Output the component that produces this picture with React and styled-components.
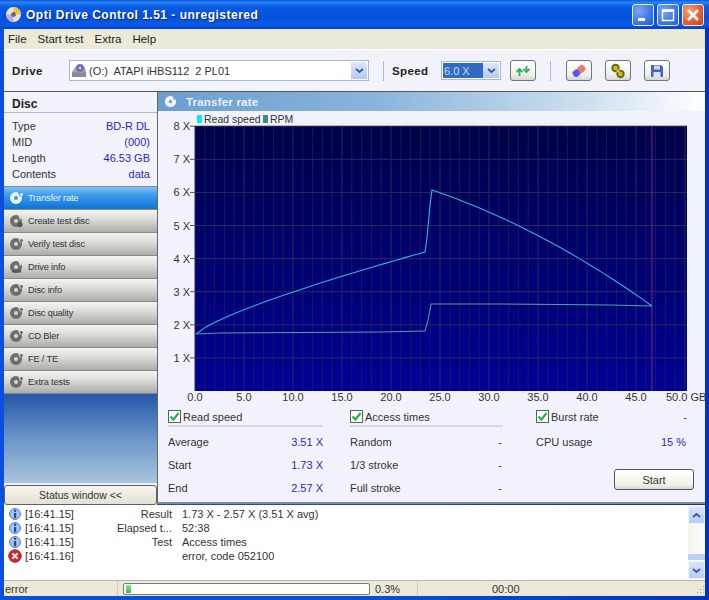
import React from 'react';
import styled, { createGlobalStyle } from 'styled-components';

const Global = createGlobalStyle`
  html, body { margin: 0; padding: 0; background: #fff; }
  body { font-family: "Liberation Sans", Arial, sans-serif; font-size: 11px; color: #222; }
`;

const Win = styled.div`
  width: 709px; height: 600px; display: flex; flex-direction: column; overflow: hidden;
  background: linear-gradient(90deg, #0a4fe0 0, #0a4fe0 50%, #0030c8 100%);
`;
const TitleBar = styled.div`
  height: 29px; flex: none; display: flex; align-items: center; padding: 0 5px 0 5px; gap: 4px;
  background: linear-gradient(180deg, #0a5ae0 0, #2a84f4 8%, #0a5ce4 22%, #0450dc 60%, #0a5ae8 85%, #0440c8 100%);
`;
const TitleText = styled.div`
  flex: 1; color: #fff; font: bold 12px "Liberation Sans", sans-serif; letter-spacing: 0.5px;
  text-shadow: 1px 1px 1px #0a2a90;
`;
const WinBtn = styled.div`
  width: 22px; height: 22px; border: 1px solid #e8f0ff; border-radius: 3px; margin-left: -1px;
  box-sizing: border-box; display: flex; align-items: center; justify-content: center;
  background: ${p => p.$close
    ? 'radial-gradient(circle at 30% 30%, #f4a070, #e85a2a 60%, #d0400f)'
    : 'radial-gradient(circle at 30% 30%, #7aa4f4, #3a72e8 65%, #2458d8)'};
`;
const Body = styled.div`
  flex: 1; display: flex; flex-direction: column; margin: 0 4px 5px; min-height: 0;
`;
const MenuBar = styled.div`
  height: 20px; flex: none; background: #ece9d8; display: flex; align-items: center;
  padding-left: 4px; gap: 11px; font-size: 11.5px; color: #222;
`;
const Toolbar = styled.div`
  height: 43px; flex: none; box-sizing: border-box; display: flex; align-items: center;
  background: #f2f2fb; border-bottom: 1px solid #555; border-top: 1px solid #fff; padding-left: 8px;
`;
const ToolLabel = styled.span`
  font-weight: bold; font-size: 11.5px; letter-spacing: 0.4px; color: #222; width: ${p => p.$w}px; flex: none;
`;
const Combo = styled.div`
  width: ${p => p.$w}px; height: ${p => p.$h}px; flex: none; box-sizing: border-box; display: flex; align-items: center;
  background: #fff; border: 1px solid #a8b8d8; padding: 1px;
`;
const ComboValue = styled.div`
  flex: 1; display: flex; align-items: center; gap: 2px; height: 100%; font-size: 11px; color: #333;
`;
const SelValue = styled.div`
  flex: 1; height: 100%; background: #316ac5; color: #c8d8f4; font-size: 11px; display: flex; align-items: center; padding-left: 1px;
`;
const ComboArrow = styled.div`
  width: 16px; height: 100%; flex: none; background: linear-gradient(180deg, #dfe8fc, #b4c8f4);
  display: flex; align-items: center; justify-content: center;
`;
const Sep = styled.div`
  width: 1px; height: 20px; background: #b8b8c4; flex: none; margin: ${p => p.$m};
`;
const ToolBtn = styled.div`
  width: 26px; height: 21px; flex: none; box-sizing: border-box; border: 1px solid #6a7a7c; border-radius: 3px;
  background: linear-gradient(180deg, #fff, #f0f0ea 70%, #d8d8d0);
  display: flex; align-items: center; justify-content: center; margin-left: ${p => p.$ml || 0}px;
`;
const Content = styled.div`
  height: 413px; flex: none; display: flex;
`;
const Sidebar = styled.div`
  width: 153px; flex: none; display: flex; flex-direction: column; background: #f0f0fa;
`;
const DiscCard = styled.div`
  height: 95px; flex: none; box-sizing: border-box; background: #f2f2fb; border-bottom: 1px solid #888;
`;
const DiscHead = styled.div`
  height: 21px; box-sizing: border-box; font-weight: bold; font-size: 12px; padding: 5px 0 0 8px; border-bottom: 1px solid #b8b8c4; color: #222;
`;
const DiscRows = styled.div`
  padding: 5px 7px 0 8px;
`;
const DiscRow = styled.div`
  height: 16px; display: flex; justify-content: space-between; align-items: center; font-size: 11px; color: #333;
`;
const Blue = styled.span`
  color: #2a2ac0;
`;
const BurstValue = styled(Blue)`
  margin-left: auto; margin-right: 7px;
`;
const NavItem = styled.div`
  height: 23px; flex: none; box-sizing: border-box; display: flex; align-items: center; padding-left: 5px; gap: 3px;
  font-size: 9.2px; letter-spacing: -0.15px; border-bottom: 1px solid #888;
  color: ${p => p.$active ? '#e8f4ff' : '#333'};
  background: ${p => p.$active
    ? 'linear-gradient(180deg, #7cc0f4 0, #3a98ec 40%, #0c74d8 100%)'
    : 'linear-gradient(180deg, #f4f4f0 0, #e0e0dc 35%, #acacaa 100%)'};
`;
const Fill = styled.div`
  flex: 1; background: linear-gradient(180deg, #2656a8 0, #6a96c8 50%, #a8c4dc 100%);
`;
const StatusBtn = styled.div`
  height: 20px; margin-top: 2px; flex: none; box-sizing: border-box; border: 1px solid #566; border-radius: 3px;
  background: linear-gradient(180deg, #f4f4ec, #e4e2d4); display: flex; align-items: center; justify-content: center;
  font-size: 10.5px; color: #333;
`;
const Main = styled.div`
  flex: 1; display: flex; flex-direction: column; background: #f2f2fd; margin-bottom: 1px;
  border-left: 1px solid #666; border-right: 0; border-bottom: 2px solid #8a8a96; min-width: 0;
`;
const PanelHead = styled.div`
  height: 19px; flex: none; display: flex; align-items: center; gap: 9px; padding-left: 6px;
  background: linear-gradient(90deg, #6a9ed0 0, #8ab4dc 40%, #d0e2f0 80%, #fff 100%);
  color: #e8f2fa; font: bold 11.5px "Liberation Sans", sans-serif; letter-spacing: 0.2px;
`;
const ChartSvg = styled.svg`
  display: block; flex: none; width: 548px; height: 295px; overflow: hidden;
`;
const Stats = styled.div`
  display: grid; grid-template-columns: 155px 153px 164px; column-gap: 27px; padding-left: 10px; margin-top: 3px;
`;
const StatCol = styled.div`
  display: flex; flex-direction: column; padding-left: ${p => p.$offset || 0}px;
`;
const CheckRow = styled.label`
  height: 15px; display: flex; align-items: center; gap: 2px; font-size: 11px; color: #333; padding-bottom: 1px;
  border-bottom: ${p => p.$plain ? '2px solid transparent' : '2px solid #d8d8e0'}; margin-bottom: 3px;
`;
const Check = styled.span`
  width: 13px; height: 13px; box-sizing: border-box; border: 1px solid #4a6a5a; background: #fff; flex: none;
  display: flex; align-items: center; justify-content: center;
`;
const StatRow = styled.div`
  height: 23px; display: flex; align-items: center; justify-content: space-between; font-size: 11px; color: #333;
  padding-right: ${p => p.$pr || 0}px;
`;
const StartBtn = styled.div`
  width: 80px; height: 21px; box-sizing: border-box; border: 1px solid #4a5a5a; border-radius: 3px; align-self: flex-end;
  margin-top: 16px; background: linear-gradient(180deg, #fff, #f2f2ea 75%, #d8d8d0);
  display: flex; align-items: center; justify-content: center; font-size: 11px; color: #333;
`;
const LogArea = styled.div`
  height: 75px; flex: none; background: #fff; display: flex; border-bottom: 1px solid #b4b4b0;
`;
const LogList = styled.div`
  flex: 1; padding-top: 2px;
`;
const LogRow = styled.div`
  height: 14px; display: grid; grid-template-columns: 17px 71px 76px 1fr; align-items: center; padding-left: 4px;
  font-size: 11px; color: #333; line-height: 14px; white-space: nowrap;
`;
const LogLabel = styled.span`
  text-align: right;
`;
const LogValue = styled.span`
  padding-left: 10px;
`;
const Scroll = styled.div`
  width: 17px; flex: none; margin: 1px 0; display: flex; flex-direction: column; background: #f4f4f0;
`;
const ScrollBtn = styled.div`
  height: 18px; flex: none; background: linear-gradient(180deg, #d8e4fc, #b8ccf4); border: 1px solid #f0f4ff; box-sizing: border-box;
  display: flex; align-items: center; justify-content: center;
`;
const ScrollTrack = styled.div`
  flex: 1; background: linear-gradient(90deg, #f4f4ec, #fcfcfa);
`;
const ScrollThumb = styled.div`
  height: 6px; flex: none; background: #c0d0f4; border-bottom: 1px solid #fff;
`;
const StatusBar = styled.div`
  height: 15px; flex: none; display: flex; align-items: center; background: #ece9d8; font-size: 11px; color: #333;
`;
const StatusCell = styled.div`
  width: ${p => p.$w}px; flex: none; height: 100%; box-sizing: border-box; display: flex; align-items: center;
  padding-left: ${p => p.$pl || 0}px; border-right: ${p => p.$line ? '1px solid #d0ccb8' : '0'};
`;
const Progress = styled.div`
  width: 247px; height: 12px; box-sizing: border-box; flex: none; margin-left: 1px; background: #fff; border: 1px solid #7a7a70;
  border-radius: 2px; padding: 1px 2px; display: flex;
`;
const ProgressFill = styled.div`
  width: 5px; background: linear-gradient(180deg, #8ce88c, #30c040);
`;
const Grip = styled.div`
  flex: 1; height: 100%; display: flex; align-items: flex-end; justify-content: flex-end;
`;

const Arrow = ({ up }) => (
  <svg width="9" height="7" viewBox="0 0 9 7">
    <path d={up ? 'M1 5 L4.5 2 L8 5' : 'M1 2 L4.5 5 L8 2'} fill="none" stroke="#3a5a9a" strokeWidth="1.8" />
  </svg>
);

const DiscIcon = ({ active, mark = 'a' }) => {
  const c = active ? '#e8f4ff' : '#6e6e6a';
  const b = active ? '#3a98ec' : '#d8d8d4';
  return (
    <svg width="16" height="14" viewBox="0 0 16 14" style={{ flex: 'none' }}>
      <circle cx="7" cy="7" r="6" fill={c} />
      <circle cx="7" cy="7" r="2" fill={b} />
      <path d="M9 1 L14 3 L11 6 Z" fill={b} />
      {mark === 'b' && <circle cx="11" cy="10.5" r="2.6" fill={active ? '#fff' : '#555'} />}
      {mark === 'c' && <path d="M3 10 H12 V12.5 H3 Z" fill="#555" />}
      {mark !== 'b' && mark !== 'c' && <path d="M12.5 2 V5 M11 3.5 H14" stroke={c} strokeWidth="1.4" />}
    </svg>
  );
};

const CheckIcon = () => (
  <Check>
    <svg width="11" height="11" viewBox="0 0 11 11">
      <path d="M1.5 5.5 L4.4 8.6 L9.6 2" fill="none" stroke="#30a840" strokeWidth="2.2" />
    </svg>
  </Check>
);

const InfoIcon = () => (
  <svg width="14" height="13" viewBox="0 0 14 13">
    <circle cx="7" cy="6" r="5.4" fill="#a8c4ec" stroke="#4a78c4" />
    <rect x="6" y="5" width="2.2" height="5" fill="#1a4aa8" />
    <rect x="6" y="1.8" width="2.2" height="2" fill="#1a4aa8" />
    <path d="M5 12 L9 12 L7 10 Z" fill="#6a90d0" />
  </svg>
);
const ErrIcon = () => (
  <svg width="14" height="14" viewBox="0 0 14 14">
    <circle cx="7" cy="7" r="6.3" fill="#d02830" stroke="#901820" strokeWidth=".8" />
    <path d="M4.4 4.4 L9.6 9.6 M9.6 4.4 L4.4 9.6" stroke="#fff" strokeWidth="2" />
  </svg>
);

const nav = [
  ['Transfer rate', 'a', true], ['Create test disc', 'b'], ['Verify test disc', 'a'], ['Drive info', 'c'],
  ['Disc info', 'a'], ['Disc quality', 'a'], ['CD Bler', 'a'], ['FE / TE', 'a'], ['Extra tests', 'a'],
];

const minor = Array.from({ length: 51 }, (_, i) => 195 + i * 9.8);

const riseCurve = Array.from({ length: 24 }, (_, i) => {
  const t = i / 23;
  return `${(196 + t * 229).toFixed(1)},${(334 - 82 * Math.pow(t, 0.78)).toFixed(1)}`;
});
const fallCurve = Array.from({ length: 23 }, (_, i) => {
  const t = (i / 22) * 220;
  return `${(432 + t).toFixed(1)},${(190 + 0.3396 * t + 0.000853 * t * t).toFixed(1)}`;
});
const readPts = [...riseCurve, '427,238', '430,205', ...fallCurve].join(' ');
const rpmPts = '196,334 220,333 300,332.5 380,332 425,331 428,320 431,304 500,304 560,304.5 610,305 652,306';
const yTicks = [1, 2, 3, 4, 5, 6, 7, 8];
const xLabels = ['0.0', '5.0', '10.0', '15.0', '20.0', '25.0', '30.0', '35.0', '40.0', '45.0'];

const Chart = () => (
  <ChartSvg viewBox="158 111 548 295">
    <defs>
      <linearGradient id="plotBg" x1="0" y1="0" x2="0" y2="1">
        <stop offset="0" stopColor="#000048" />
        <stop offset="0.5" stopColor="#000070" />
        <stop offset="1" stopColor="#000098" />
      </linearGradient>
    </defs>
    <rect x="197" y="115" width="5" height="8" fill="#10e8f0" />
    <text x="204" y="123" fontSize="10.5" fill="#333">Read speed</text>
    <rect x="263" y="115" width="5" height="8" fill="#408880" />
    <text x="270" y="123" fontSize="10.5" fill="#333">RPM</text>
    <rect x="195" y="126" width="492" height="265" fill="url(#plotBg)" />
    {minor.map((x, i) => (
      <line key={i} x1={x} x2={x} y1="126" y2="391" stroke={i % 5 === 0 ? '#2a2a58' : '#181a58'} strokeWidth="1" />
    ))}
    {yTicks.map(v => {
      const y = 391 - v * 33.1;
      return (
        <g key={v}>
          <line x1="195" x2="687" y1={y} y2={y} stroke="#2a2a58" />
          <line x1="190" x2="195" y1={y} y2={y} stroke="#555" />
          <text x="190" y={y + 4} textAnchor="end" fontSize="11" fill="#333">{v} X</text>
        </g>
      );
    })}
    <line x1="652" x2="652" y1="126" y2="391" stroke="#701a88" strokeWidth="1.2" />
    <polyline points={rpmPts} fill="none" stroke="#5aa09c" strokeWidth="1" />
    <polyline points={readPts} fill="none" stroke="#2ab4dc" strokeWidth="1.1" />
    {xLabels.map((t, i) => (
      <text key={t} x={195 + i * 49} y="401" textAnchor="middle" fontSize="11" fill="#333">{t}</text>
    ))}
    <text x="666" y="401" fontSize="11" fill="#333">50.0 GB</text>
  </ChartSvg>
);

export default function App() {
  return (
    <Win>
      <Global />
      <TitleBar>
        <svg width="17" height="17" viewBox="0 0 17 17">
          <circle cx="8.5" cy="8.5" r="7.5" fill="#e8e4d8" />
          <path d="M8.5 1 A7.5 7.5 0 0 1 16 8.5 L8.5 8.5 Z" fill="#f0c040" />
          <path d="M8.5 16 A7.5 7.5 0 0 1 1 8.5 L8.5 8.5 Z" fill="#c8a8d0" />
          <circle cx="8.5" cy="8.5" r="2.4" fill="#5a6a90" />
        </svg>
        <TitleText>Opti Drive Control 1.51 - unregistered</TitleText>
        <WinBtn>
          <svg width="14" height="14" viewBox="0 0 14 14"><rect x="2" y="10" width="7" height="3" fill="#fff" /></svg>
        </WinBtn>
        <WinBtn>
          <svg width="14" height="14" viewBox="0 0 14 14"><rect x="1.5" y="2" width="11" height="10.5" fill="none" stroke="#fff" strokeWidth="1.4" /><rect x="1" y="1.5" width="12" height="2.4" fill="#fff" /></svg>
        </WinBtn>
        <WinBtn $close>
          <svg width="14" height="14" viewBox="0 0 14 14"><path d="M2 2 L12 12 M12 2 L2 12" stroke="#fff" strokeWidth="2.6" /></svg>
        </WinBtn>
      </TitleBar>
      <Body>
        <MenuBar><span>File</span><span>Start test</span><span>Extra</span><span>Help</span></MenuBar>
        <Toolbar>
          <ToolLabel $w={57}>Drive</ToolLabel>
          <Combo $w={300} $h={21}>
            <ComboValue>
              <svg width="16" height="15" viewBox="0 0 16 15">
                <path d="M1 10 L5 4 H13 L15 10 Z" fill="#a8a8b8" stroke="#667" strokeWidth=".6" />
                <rect x="1" y="10" width="14" height="4" fill="#8a8a96" />
                <circle cx="9" cy="5" r="4" fill="#6a70c0" />
                <circle cx="9" cy="5" r="1.2" fill="#dde" />
              </svg>
              <span>(O:)&nbsp; ATAPI iHBS112&nbsp; 2 PL01</span>
            </ComboValue>
            <ComboArrow><Arrow /></ComboArrow>
          </Combo>
          <Sep $m="0 8px 0 14px" />
          <ToolLabel $w={49}>Speed</ToolLabel>
          <Combo $w={60} $h={19}>
            <SelValue>6.0 X</SelValue>
            <ComboArrow><Arrow /></ComboArrow>
          </Combo>
          <ToolBtn $ml={9}>
            <svg width="16" height="14" viewBox="0 0 16 14">
              <path d="M1.5 8 L4.5 5 L7.5 8 M4.5 5.5 V12" fill="none" stroke="#30b070" strokeWidth="1.9" />
              <path d="M8.5 5 L11.5 8 L14.5 5 M11.5 8 V2" fill="none" stroke="#30b070" strokeWidth="1.9" />
            </svg>
          </ToolBtn>
          <Sep $m="0 15px 0 14px" />
          <ToolBtn>
            <svg width="18" height="16" viewBox="0 0 18 16">
              <g transform="rotate(-40 9 8)">
                <rect x="8" y="4.5" width="8" height="7" rx="2.5" fill="#f07878" />
                <rect x="2" y="4.5" width="7" height="7" rx="2.5" fill="#5a5ae0" />
              </g>
            </svg>
          </ToolBtn>
          <ToolBtn $ml={13}>
            <svg width="18" height="16" viewBox="0 0 18 16">
              <circle cx="6.5" cy="5" r="3.2" fill="#c8c030" stroke="#6a6a18" strokeWidth="2" />
              <circle cx="11.5" cy="11" r="3.2" fill="#c8c030" stroke="#6a6a18" strokeWidth="2" />
              <path d="M8 7 L10 9" stroke="#e0d030" strokeWidth="2.6" />
            </svg>
          </ToolBtn>
          <ToolBtn $ml={13}>
            <svg width="14" height="14" viewBox="0 0 14 14">
              <path d="M1 1 H11 L13 3 V13 H1 Z" fill="#4a60cc" />
              <rect x="4" y="1.5" width="6" height="4" fill="#c8d4f0" />
              <rect x="3.5" y="8" width="7" height="5" fill="#dde4f6" />
            </svg>
          </ToolBtn>
        </Toolbar>
        <Content>
          <Sidebar>
            <DiscCard>
              <DiscHead>Disc</DiscHead>
              <DiscRows>
                <DiscRow><span>Type</span><Blue>BD-R DL</Blue></DiscRow>
                <DiscRow><span>MID</span><Blue>(000)</Blue></DiscRow>
                <DiscRow><span>Length</span><Blue>46.53 GB</Blue></DiscRow>
                <DiscRow><span>Contents</span><Blue>data</Blue></DiscRow>
              </DiscRows>
            </DiscCard>
            {nav.map(([label, mark, active]) => (
              <NavItem key={label} $active={active}><DiscIcon active={active} mark={mark} />{label}</NavItem>
            ))}
            <Fill />
            <StatusBtn>Status window &lt;&lt;</StatusBtn>
          </Sidebar>
          <Main>
            <PanelHead>
              <svg width="13" height="13" viewBox="0 0 14 14">
                <circle cx="7" cy="7" r="6" fill="#f0f6fc" />
                <circle cx="7" cy="7" r="2" fill="#7aa6d4" />
                <path d="M9 1 L14 3 L11 6 Z" fill="#7aa6d4" />
              </svg>
              Transfer rate
            </PanelHead>
            <Chart />
            <Stats>
              <StatCol>
                <CheckRow><CheckIcon />Read speed</CheckRow>
                <StatRow><span>Average</span><Blue>3.51 X</Blue></StatRow>
                <StatRow><span>Start</span><Blue>1.73 X</Blue></StatRow>
                <StatRow><span>End</span><Blue>2.57 X</Blue></StatRow>
              </StatCol>
              <StatCol>
                <CheckRow><CheckIcon />Access times</CheckRow>
                <StatRow $pr={1}><span>Random</span><span>-</span></StatRow>
                <StatRow $pr={1}><span>1/3 stroke</span><Blue>-</Blue></StatRow>
                <StatRow $pr={1}><span>Full stroke</span><span>-</span></StatRow>
              </StatCol>
              <StatCol $offset={6}>
                <CheckRow $plain>
                  <CheckIcon />Burst rate<BurstValue>-</BurstValue>
                </CheckRow>
                <StatRow $pr={8}><span>CPU usage</span><Blue>15 %</Blue></StatRow>
                <StartBtn>Start</StartBtn>
              </StatCol>
            </Stats>
          </Main>
        </Content>
        <LogArea>
          <LogList>
            <LogRow><InfoIcon /><span>[16:41.15]</span><LogLabel>Result</LogLabel><LogValue>1.73 X - 2.57 X (3.51 X avg)</LogValue></LogRow>
            <LogRow><InfoIcon /><span>[16:41.15]</span><LogLabel>Elapsed t...</LogLabel><LogValue>52:38</LogValue></LogRow>
            <LogRow><InfoIcon /><span>[16:41.15]</span><LogLabel>Test</LogLabel><LogValue>Access times</LogValue></LogRow>
            <LogRow><ErrIcon /><span>[16:41.16]</span><LogLabel /><LogValue>error, code 052100</LogValue></LogRow>
          </LogList>
          <Scroll>
            <ScrollBtn><Arrow up /></ScrollBtn>
            <ScrollTrack />
            <ScrollThumb />
            <ScrollBtn><Arrow /></ScrollBtn>
          </Scroll>
        </LogArea>
        <StatusBar>
          <StatusCell $w={114} $pl={1} $line>error</StatusCell>
          <StatusCell $w={4} />
          <Progress><ProgressFill /></Progress>
          <StatusCell $w={48} $pl={5} $line>0.3%</StatusCell>
          <StatusCell $w={150} $pl={74}>00:00</StatusCell>
          <Grip>
            <svg width="12" height="12" viewBox="0 0 12 12">
              <path d="M10 2 h1 v1 h-1z M7 5 h1 v1 h-1z M10 5 h1 v1 h-1z M4 8 h1 v1 h-1z M7 8 h1 v1 h-1z M10 8 h1 v1 h-1z" fill="#a8a490" />
            </svg>
          </Grip>
        </StatusBar>
      </Body>
    </Win>
  );
}
